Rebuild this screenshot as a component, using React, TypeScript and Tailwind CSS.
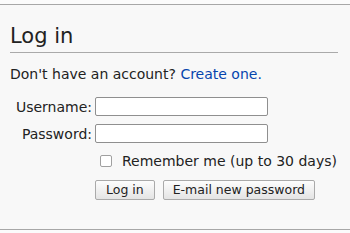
export default function App() {
  return (
    <div
      className="w-[350px] h-[233px] bg-[#fbfbfb] pt-[4px] overflow-hidden"
      style={{ fontFamily: '"DejaVu Sans", sans-serif' }}
    >
      <div className="border-t border-b border-[#a7a7a7] bg-[#f8f8f8] h-[226px] px-[10px] text-[#222]">
        <h1 className="mt-[17px] text-[21px] leading-[28px] border-b border-[#aaa] pb-[2px] mr-[2px]">Log in</h1>
        <p className="mt-[13px] text-[14px] leading-[16px]">
          Don&apos;t have an account? <a className="text-[#0645ad]">Create one.</a>
        </p>
        <div className="mt-[15px] grid grid-cols-[82px_173px] gap-x-[3px] gap-y-[8px] items-center text-[14px] leading-[16px]">
          <label className="text-right">Username:</label>
          <input className="h-[19px] bg-white border border-[#8f8f8f] rounded-[2px]" />
          <label className="text-right">Password:</label>
          <input type="password" className="h-[19px] bg-white border border-[#8f8f8f] rounded-[2px]" />
        </div>
        <div className="mt-[10px] ml-[90px] h-[16px] flex items-center gap-[10px] text-[14px] leading-[16px]">
          <span className="w-[12px] h-[12px] border border-[#a0a0a0] rounded-[2px] bg-white" />
          <span>Remember me (up to 30 days)</span>
        </div>
        <div className="mt-[11px] ml-[85px] flex gap-[8px] text-[12.5px] leading-[16px]">
          <button className="h-[20px] px-[10px] border border-[#aaa] rounded-[2px] bg-gradient-to-b from-[#fdfdfd] to-[#e4e4e4] text-[#222]">Log in</button>
          <button className="h-[20px] px-[9px] border border-[#aaa] rounded-[2px] bg-gradient-to-b from-[#fdfdfd] to-[#e4e4e4] text-[#222]">E-mail new password</button>
        </div>
      </div>
    </div>
  );
}
